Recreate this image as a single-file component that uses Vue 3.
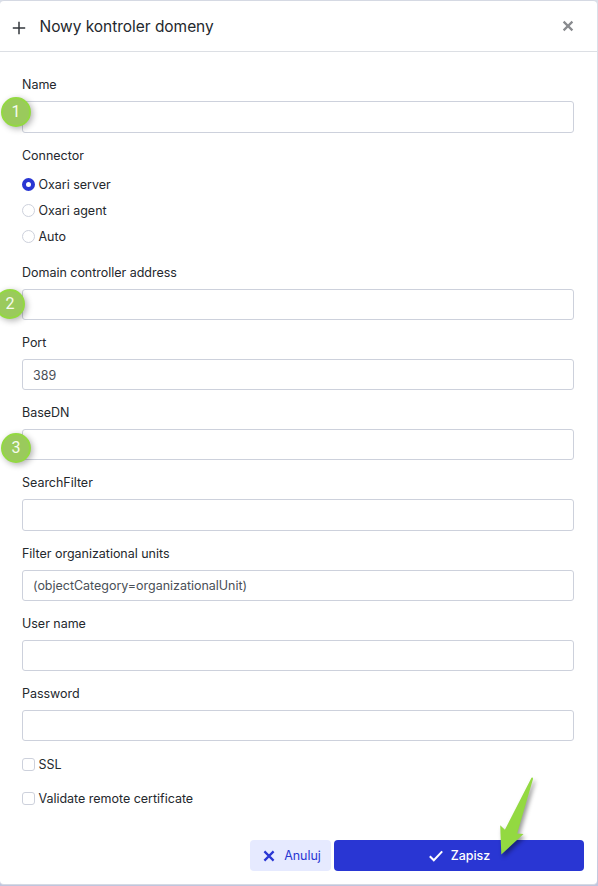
<script setup>
import { ref } from 'vue'

const connectors = ['Oxari server', 'Oxari agent', 'Auto']
const connector = ref('Oxari server')
const name = ref('')
const ssl = ref(false)
const validate = ref(false)

const fields = ref([
  { label: 'Domain controller address', value: '', step: 2 },
  { label: 'Port', value: '389' },
  { label: 'BaseDN', value: '', step: 3 },
  { label: 'SearchFilter', value: '' },
  { label: 'Filter organizational units', value: '(objectCategory=organizationalUnit)' },
  { label: 'User name', value: '' },
  { label: 'Password', value: '', type: 'password' }
])
</script>

<template>
  <div class="backdrop">
    <div class="modal">
      <header class="modal-header">
        <svg class="plus" width="14" height="14" viewBox="0 0 14 14">
          <path d="M7 .8v12.4M.8 7h12.4" fill="none" stroke="#33373c" stroke-width="1.5" />
        </svg>
        <h1>Nowy kontroler domeny</h1>
        <button class="close" aria-label="Zamknij">
          <svg width="12" height="12" viewBox="0 0 12 12">
            <path d="M1.6 1.6l8.8 8.8M10.4 1.6l-8.8 8.8" fill="none" stroke="#898b8f" stroke-width="2.2" />
          </svg>
        </button>
      </header>

      <form class="modal-body" @submit.prevent>
        <div class="field">
          <label>Name</label>
          <div class="control">
            <input v-model="name" type="text" />
            <span class="step step-1">1</span>
          </div>
        </div>

        <div class="connector">
          <label>Connector</label>
          <div class="radios">
            <label v-for="c in connectors" :key="c" class="option">
              <input v-model="connector" type="radio" name="connector" :value="c" />
              <span>{{ c }}</span>
            </label>
          </div>
        </div>

        <div v-for="f in fields" :key="f.label" class="field">
          <label>{{ f.label }}</label>
          <div class="control">
            <input v-model="f.value" :type="f.type || 'text'" />
            <span v-if="f.step" class="step" :class="'step-' + f.step">{{ f.step }}</span>
          </div>
        </div>

        <div class="checks">
          <label class="option">
            <input v-model="ssl" type="checkbox" />
            <span>SSL</span>
          </label>
          <label class="option">
            <input v-model="validate" type="checkbox" />
            <span>Validate remote certificate</span>
          </label>
        </div>
      </form>

      <footer class="modal-footer">
        <button class="btn cancel">
          <svg width="12" height="12" viewBox="0 0 12 12">
            <path d="M1.4 1.4l9.2 9.2M10.6 1.4l-9.2 9.2" fill="none" stroke="#2936d3" stroke-width="2.2" />
          </svg>
          <span>Anuluj</span>
        </button>
        <button class="btn save">
          <svg width="14" height="12" viewBox="0 0 14 12">
            <path d="M.8 6.3l4 4L13.2 1.4" fill="none" stroke="#fff" stroke-width="2" />
          </svg>
          <span>Zapisz</span>
          <svg class="arrow" width="60" height="100" viewBox="0 0 60 100">
            <path d="M39.5 7.8Q41 7 41 9L25.2 63.5L31.5 64L9.3 84.6L8.2 55.3L12.9 59.8Z" fill="#93d941" />
          </svg>
        </button>
      </footer>
    </div>
  </div>
</template>

<style>
body {
  margin: 0;
  background: #c3c7e2;
}
</style>

<style scoped>
* {
  box-sizing: border-box;
}

.backdrop {
  height: 886px;
  overflow: hidden;
  padding-right: 1px;
  background: linear-gradient(#dadfe9 90%, #c0c5de);
  font-family: Inter, "Liberation Sans", sans-serif;
  font-size: 12.5px;
  letter-spacing: -0.02px;
  color: #24282d;
}

.modal {
  display: flex;
  flex-direction: column;
  height: 885px;
  border: solid #d5d9e3;
  border-width: 1px 0;
  border-radius: 4px;
  background: #fff;
}

.modal-header {
  display: flex;
  align-items: center;
  height: 51px;
  padding: 0 23px 0 12px;
  border-bottom: 1px solid #dcdfe4;
}

.plus {
  margin-top: 4px;
}

h1 {
  flex: 1;
  margin: 0 0 0 13.5px;
  padding-top: 2px;
  font-size: 15.5px;
  font-weight: 400;
  line-height: 24px;
  letter-spacing: -0.04px;
}

button {
  border: 0;
  font: inherit;
  letter-spacing: inherit;
}

.close {
  display: flex;
  padding: 0;
  background: none;
}

.modal-body {
  flex: 1;
  padding: 22.9px 23px 0 22px;
}

.field {
  height: 70.2px;
}

.field > label,
.connector > label {
  display: block;
  height: 19.5px;
  padding-top: 0.6px;
  line-height: 19.5px;
}

.connector > label {
  padding-top: 1px;
}

.control {
  position: relative;
  margin-top: 7px;
}

.control input {
  display: block;
  width: 100%;
  height: 31.2px;
  padding: 1px 10px 0;
  border: 1px solid #cdd1dc;
  border-radius: 3px;
  background: #fff;
  color: #4a5057;
  font: inherit;
  letter-spacing: inherit;
  outline: none;
}

.connector {
  height: 117.2px;
}

.radios {
  margin-top: 6.9px;
}

.option {
  display: flex;
  align-items: center;
  gap: 3.5px;
  height: 26px;
}

.option input {
  appearance: none;
  width: 13px;
  height: 13px;
  margin: 0;
  border: 1px solid #cdd1dc;
  border-radius: 3px;
  background: #fff;
}

.option input[type='radio'] {
  border-radius: 50%;
}

.option input[type='radio']:checked {
  border: 4px solid #2936d3;
}

.checks {
  display: flex;
  flex-direction: column;
  gap: 8px;
  margin-top: -2.3px;
}

.modal-footer {
  display: flex;
  gap: 3px;
  padding: 0 13px 13px 250px;
}

.btn {
  display: flex;
  align-items: center;
  justify-content: center;
  height: 31px;
  padding: 0;
  border-radius: 4px;
}

.cancel {
  width: 81px;
  gap: 9px;
  padding-left: 3px;
  background: #e6eaff;
  color: #2936d3;
}

.save {
  position: relative;
  flex: 1;
  gap: 8px;
  padding-left: 1px;
  background: #2936d3;
  color: #fff;
  font-weight: 500;
}

/* numbered hints and the arrow lie over the form */
.step {
  position: absolute;
  display: flex;
  align-items: center;
  justify-content: center;
  width: 30px;
  height: 30px;
  border: 2px solid #93d941;
  border-radius: 50%;
  background: #9aca5c;
  box-shadow: 2px 2px 6px rgba(0, 0, 0, 0.3);
  color: #f6fbef;
  font-family: Roboto, sans-serif;
  font-size: 16px;
}

.step-1 {
  left: -21px;
  top: -4.6px;
}

.step-2 {
  left: -27px;
  top: -0.2px;
}

.step-3 {
  left: -21px;
  top: 3.4px;
}

.arrow {
  position: absolute;
  left: 158px;
  top: -70px;
  filter: drop-shadow(2px 3px 2px rgba(0, 0, 0, 0.4));
}
</style>
